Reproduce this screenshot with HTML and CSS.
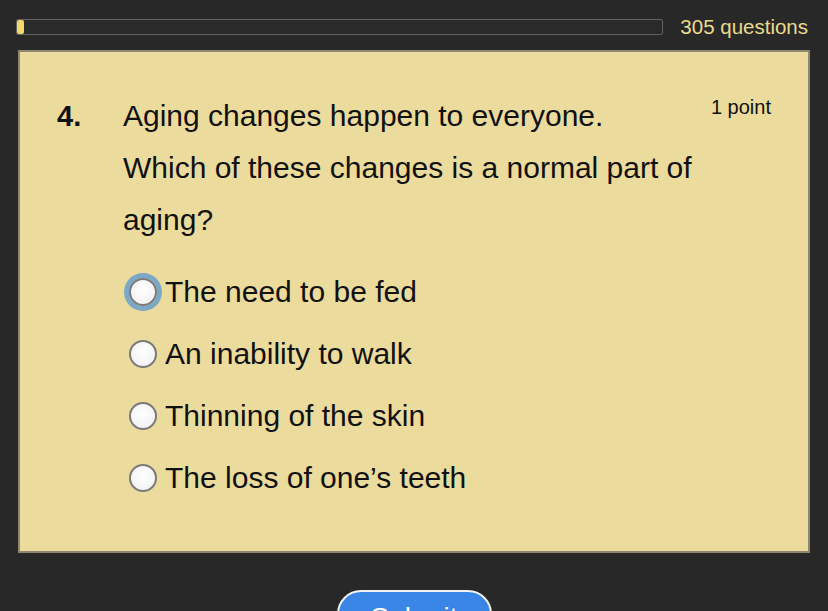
FILE: index.html
```html
<!DOCTYPE html>
<html lang="en">
<head>
    <meta charset="UTF-8">
    <meta name="viewport" content="width=device-width, initial-scale=1.0">
    <title>Quiz</title>
    <link rel="stylesheet" href="styles.css">
</head>
<body>
    <div class="topbar">
        <div class="progress"><div class="progress-fill"></div></div>
        <div class="count">305 questions</div>
    </div>
    <div class="card">
        <div class="question">
            <div class="number">4.</div>
            <div class="text">Aging changes happen to everyone.<br>Which of these changes is a normal part of aging?</div>
            <div class="points">1 point</div>
        </div>
        <div class="options">
            <label class="option"><span class="radio focused"></span>The need to be fed</label>
            <label class="option"><span class="radio"></span>An inability to walk</label>
            <label class="option"><span class="radio"></span>Thinning of the skin</label>
            <label class="option"><span class="radio"></span>The loss of one’s teeth</label>
        </div>
    </div>
    <div class="actions">
        <button class="submit">Submit</button>
    </div>
</body>
</html>
```

FILE: styles.css
```css
body {
    margin: 0;
    background-color: #282828;
    font-family: "Liberation Sans", Arial, sans-serif;
    overflow: hidden;
}
.topbar {
    display: flex;
    align-items: center;
    padding: 14px 20px 0 16px;
    height: 26px;
}
.progress {
    flex: 1;
    height: 14px;
    border: 1px solid #626262;
    border-radius: 2px;
    background: #2a2a2a;
    margin-right: 17px;
}
.progress-fill {
    width: 7px;
    height: 100%;
    background: #f1d86a;
    border-radius: 2px;
}
.count {
    color: #eadb8c;
    font-size: 20.5px;
}
.card {
    margin: 10px 18px 0 18px;
    height: 499px;
    background: #ebdb9c;
    border: 2px solid #8f8770;
    box-sizing: content-box;
    width: 788px;
}
.question {
    display: flex;
    padding: 38px 37px 0 37px;
    color: #111;
}
.number {
    width: 66px;
    font-size: 29px;
    font-weight: bold;
    line-height: 52px;
}
.text {
    width: 580px;
    font-size: 30px;
    line-height: 52px;
}
.points {
    flex: 1;
    text-align: right;
    font-size: 20px;
    line-height: 34px;
}
.options {
    padding: 15px 0 0 109px;
}
.option {
    display: flex;
    align-items: center;
    height: 62px;
    font-size: 30px;
    color: #111;
}
.radio {
    width: 24px;
    height: 24px;
    border: 2px solid #7a7a7a;
    border-radius: 50%;
    background: radial-gradient(circle at 50% 40%, #ffffff, #eeeef2);
    margin-right: 8px;
    flex-shrink: 0;
}
.radio.focused {
    box-shadow: 0 0 0 5px #7ba8c6;
}
.actions {
    display: flex;
    justify-content: center;
    padding-top: 37px;
}
.submit {
    width: 155px;
    height: 52px;
    background: #3a86e6;
    color: white;
    border: 2px solid #f2f2f2;
    border-radius: 24px;
    font-family: "Liberation Sans", Arial, sans-serif;
    font-size: 28px;
    padding: 4px 0 0 0;
    line-height: 28px;
    vertical-align: top;
}
```
